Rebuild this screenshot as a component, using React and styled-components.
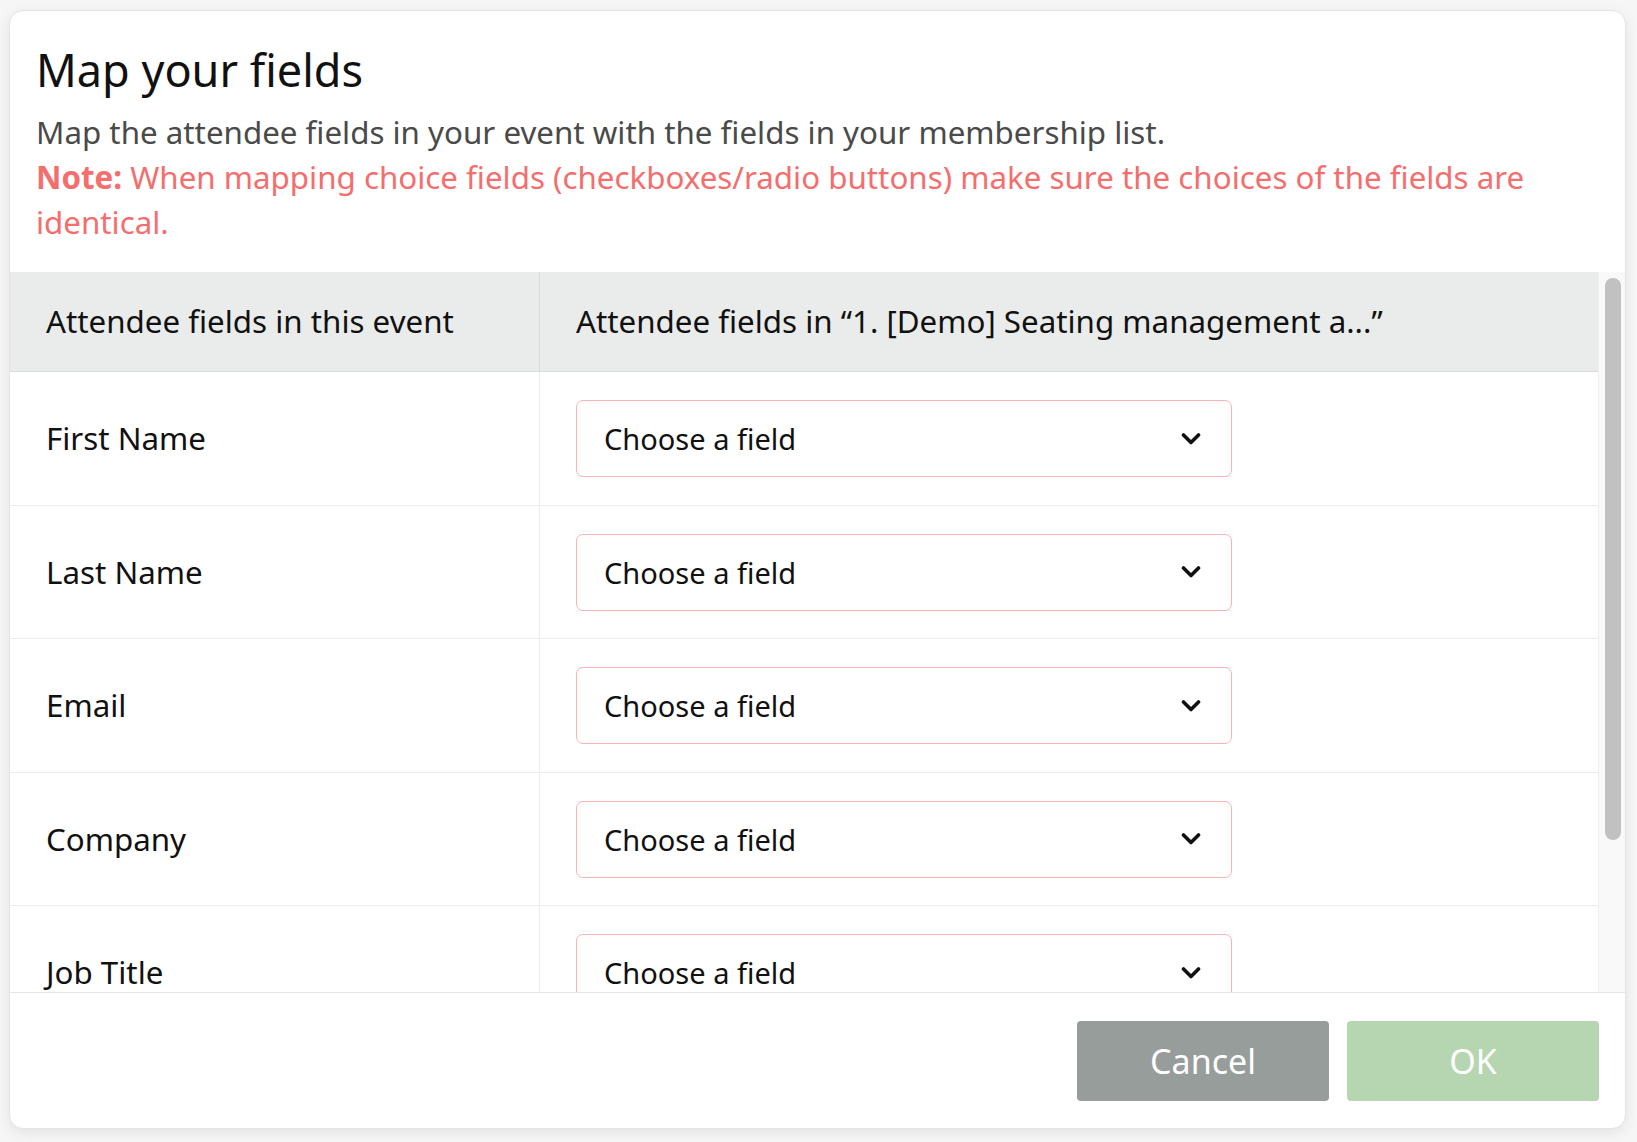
import React from "react";
import styled, { createGlobalStyle } from "styled-components";

const GlobalStyle = createGlobalStyle`
  html, body {
    margin: 0;
    padding: 0;
    background: #f6f6f6;
    font-family: "Noto Sans", "Open Sans", Arial, sans-serif;
  }
  * { box-sizing: border-box; }
`;

const fields = ["First Name", "Last Name", "Email", "Company", "Job Title", "Phone"];

function Chevron() {
  return (
    <svg width="20" height="12" viewBox="0 0 20 12" fill="none">
      <polyline points="2.5,2 10,9.5 17.5,2" stroke="#111" strokeWidth="3.6" strokeLinecap="round" strokeLinejoin="round" />
    </svg>
  );
}

export default function App() {
  return (
    <Page>
      <GlobalStyle />
      <Modal>
        <Header>
          <Title>Map your fields</Title>
          <Description>Map the attendee fields in your event with the fields in your membership list.</Description>
          <Note>
            <strong>Note:</strong> When mapping choice fields (checkboxes/radio buttons) make sure the choices of the fields are identical.
          </Note>
        </Header>

        <ScrollFrame>
          <ScrollArea>
            <Table>
              <HeadCell>Attendee fields in this event</HeadCell>
              <HeadCell divider>Attendee fields in “1. [Demo] Seating management a...”</HeadCell>
              {fields.map(name => (
                <React.Fragment key={name}>
                  <LabelCell>{name}</LabelCell>
                  <SelectCell>
                    <SelectBox>
                      <span>Choose a field</span>
                      <Chevron />
                    </SelectBox>
                  </SelectCell>
                </React.Fragment>
              ))}
            </Table>
          </ScrollArea>
          <Track>
            <Thumb />
          </Track>
        </ScrollFrame>

        <Footer>
          <Button variant="cancel">Cancel</Button>
          <Button variant="ok">OK</Button>
        </Footer>
      </Modal>
    </Page>
  );
}

const Page = styled.div`
  width: 1637px;
  height: 1142px;
  padding: 10px 11px 13px 9px;
  overflow: hidden;
`;

const Modal = styled.div`
  width: 1617px;
  height: 1119px;
  background: #fff;
  border: 1px solid #e4e4e4;
  border-radius: 14px;
  box-shadow: 0 4px 14px rgba(0, 0, 0, 0.08);
  display: flex;
  flex-direction: column;
  overflow: hidden;
`;

const Header = styled.div`
  padding: 32px 24px 27px 26px;
`;

const Title = styled.h1`
  margin: 0 0 13px;
  font-size: 45px;
  line-height: 54px;
  font-weight: 400;
  color: #111;
`;

const Description = styled.p`
  margin: 0;
  font-size: 31.3px;
  line-height: 45px;
  color: #4a4a4a;
`;

const Note = styled.p`
  margin: 0;
  font-size: 31.3px;
  line-height: 45px;
  color: #f56e6e;

  strong {
    font-weight: 700;
  }
`;

const ScrollFrame = styled.div`
  flex: 1;
  min-height: 0;
  display: flex;
`;

const ScrollArea = styled.div`
  flex: 1;
  overflow: hidden;
`;

const Track = styled.div`
  flex: none;
  width: 27px;
  background: #f9f9f9;
  border-left: 1px solid #efefef;
  padding: 6px 5px 0 6px;
`;

const Thumb = styled.div`
  width: 16px;
  height: 562px;
  border-radius: 8px;
  background: #c1c1c1;
`;

const Table = styled.div`
  display: grid;
  grid-template-columns: 529px 1fr;
`;

const HeadCell = styled.div`
  height: 100px;
  display: flex;
  align-items: center;
  padding-left: 36px;
  padding-bottom: 2px;
  background: #eaeceb;
  border-bottom: 1px solid #dcdedd;
  border-left: ${p => (p.divider ? "1px solid #dadcdb" : "none")};
  font-size: 31.3px;
  color: #111;
  white-space: nowrap;
`;

const LabelCell = styled.div`
  display: flex;
  align-items: center;
  padding-left: 36px;
  border-bottom: 1px solid #ececec;
  font-size: 31.3px;
  color: #111;
`;

const SelectCell = styled.div`
  padding: 28px 0 27.5px 36px;
  border-left: 1px solid #ececec;
  border-bottom: 1px solid #ececec;
`;

const SelectBox = styled.div`
  width: 656px;
  height: 77px;
  border: 1px solid #f8b3b3;
  border-radius: 7px;
  display: flex;
  align-items: center;
  justify-content: space-between;
  padding: 0 30px 0 27px;
  font-size: 29px;
  color: #111;
  background: #fff;
`;

const Footer = styled.div`
  flex: none;
  height: 136px;
  border-top: 1px solid #e6e6e6;
  display: flex;
  justify-content: flex-end;
  align-items: flex-start;
  gap: 18px;
  padding: 28px 26px 0 0;
`;

const Button = styled.button`
  width: 252px;
  height: 80px;
  border: none;
  border-radius: 4px;
  font-family: inherit;
  font-size: 34px;
  line-height: 46px;
  color: #fff;
  background: ${p => (p.variant === "ok" ? "#b5d6b1" : "#979d9b")};
  cursor: pointer;
`;
